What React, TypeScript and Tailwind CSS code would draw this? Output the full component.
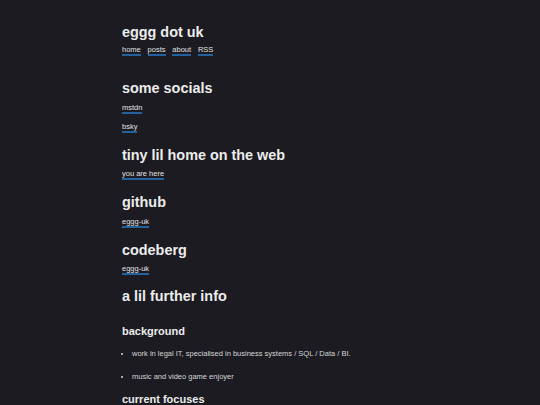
const nav = ['home', 'posts', 'about', 'RSS'];

function Link({ children, className = '' }: { children: React.ReactNode; className?: string }) {
  return <a className={`border-b-2 border-[#23629c] text-[#e2e2e2] ${className}`}>{children}</a>;
}

function Section({ title, items, first = false }: { title: string; items: string[]; first?: boolean }) {
  return (
    <>
      <h2 className={`${first ? 'mt-[23px]' : 'mt-[13px]'} text-[14.4px] font-bold leading-[18px] text-[#ececec]`}>{title}</h2>
      {items.map((item, i) => (
        <p key={item} className={`${i === 0 ? 'mt-[4.5px]' : 'mt-[7px]'} leading-[12px]`}>
          <Link>{item}</Link>
        </p>
      ))}
    </>
  );
}

export default function App() {
  return (
    <div className="min-h-[405px] bg-[#1b1b21] text-[7.5px] text-[#d6d6d6]" style={{ fontFamily: '"Liberation Sans", Arial, sans-serif' }}>
      <main className="mx-auto flex w-[296px] flex-col pt-[23px]">
        <h1 className="text-[14.4px] font-bold leading-[18px] text-[#ececec]">eggg dot uk</h1>
        <p className="mt-[3.4px] leading-[12px]">
          {nav.map((l) => (
            <Link key={l} className="mr-[6.8px]">{l}</Link>
          ))}
        </p>

        <Section first title="some socials" items={['mstdn', 'bsky']} />
        <Section title="tiny lil home on the web" items={['you are here']} />
        <Section title="github" items={['eggg-uk']} />
        <Section title="codeberg" items={['eggg-uk']} />

        <h2 className="mt-[11.5px] text-[14.4px] font-bold leading-[18px] text-[#ececec]">a lil further info</h2>

        <h3 className="mt-[19.5px] text-[11px] font-bold leading-[14px] text-[#ececec]">background</h3>
        <ul className="mt-[10px] list-disc pl-[10px] leading-[12px]">
          <li>work in legal IT, specialised in business systems / SQL / Data / BI.</li>
          <li className="mt-[11px]">music and video game enjoyer</li>
        </ul>

        <h3 className="mt-[9px] text-[11px] font-bold leading-[14px] text-[#ececec]">current focuses</h3>
      </main>
    </div>
  );
}
